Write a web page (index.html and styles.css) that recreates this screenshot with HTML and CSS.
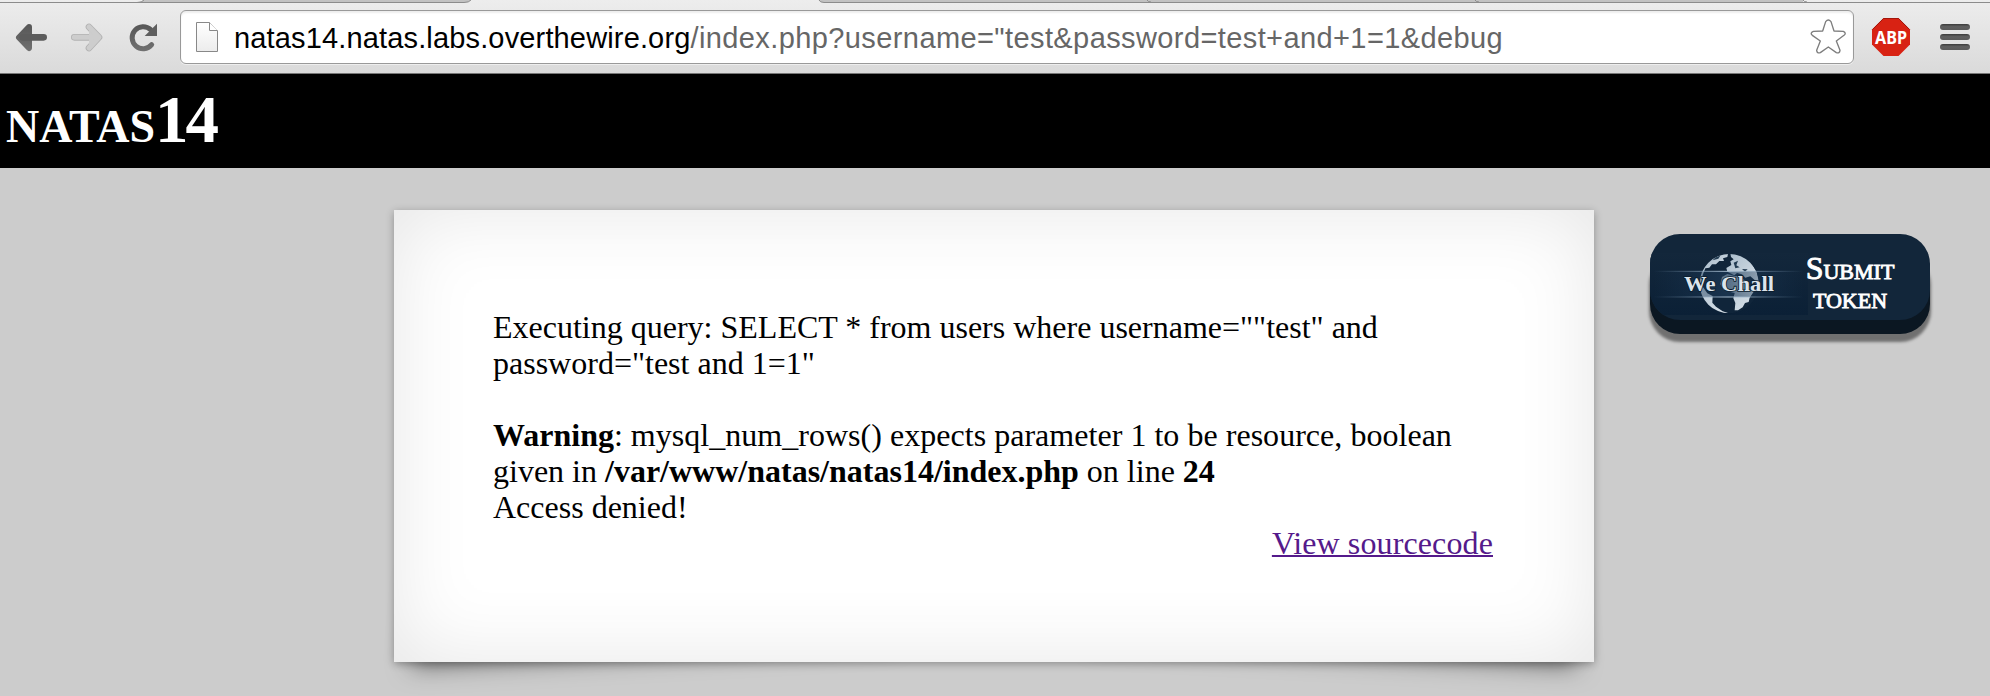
FILE: index.html
```
<!DOCTYPE html>
<html lang="en">
<head>
<meta charset="utf-8">
<title>natas14</title>
<link rel="stylesheet" href="styles.css">
</head>
<body>
<header class="browser">
  <svg class="tabs" width="1990" height="4" viewBox="0 0 1990 4">
    <path class="tab-bg" d="M139 2.5L144 0H471Q468 2.5 465 2.5Z"/>
    <path class="tab-bg" d="M819 0Q821 2.5 824 2.5H1803V0Z"/>
    <path class="tab-line" d="M0 2.5H137Q142 2.5 144 0M137 2.5H464Q469 2.5 471 0M819 0Q820 2.5 824 2.5H1990M1147 0Q1148 2 1151 2M1475 0Q1476 2 1479 2M1803 0Q1804 2 1807 2"/>
  </svg>
  <div class="toolbar">
    <svg class="nav-icons" width="176" height="54" viewBox="0 30 528 162">
      <defs>
        <linearGradient id="ink" x1="0" y1="70" x2="0" y2="154" gradientUnits="userSpaceOnUse">
          <stop offset="0" stop-color="#555"/><stop offset="1" stop-color="#717171"/>
        </linearGradient>
      </defs>
      <g fill="none" stroke="url(#ink)" stroke-width="18" stroke-linecap="round" stroke-linejoin="round">
        <path fill="#646464" d="M87 81L57 112.500L87 144V112Z"/>
        <path stroke="#5c5c5c" stroke-width="20" d="M68 112H131"/>
      </g>
      <g fill="none" stroke-linecap="round" stroke-linejoin="round">
        <path stroke="#b2b2b2" stroke-width="20" d="M223 112H286M267 81L297 112L267 144"/>
        <path fill="#cdcdcd" stroke="#cdcdcd" stroke-width="15" d="M223 112H286M267 81L297 112L267 144"/>
      </g>
      <path fill="none" stroke="url(#ink)" stroke-width="15" stroke-linecap="round" d="M455 134A33 33 0 1 1 452 89"/>
      <path fill="#5f5f5f" d="M471 71V108H434L446 96L458 84Z"/>
    </svg>
    <div class="address">
      <svg class="page-icon" width="24" height="32" viewBox="0 0 24 32">
        <defs><linearGradient id="paper" x1="0" y1="0" x2="0" y2="1"><stop offset="0" stop-color="#fff"/><stop offset="1" stop-color="#ececec"/></linearGradient></defs>
        <path fill="url(#paper)" stroke="#888" d="M1.500 1.500H14.500L22.500 10V30.500H1.500Z"/>
        <path fill="#fff" stroke="#888" d="M14.500 1.500V9.500H22.500"/>
      </svg>
      <span class="url"><span class="host">natas14.natas.labs.overthewire.org</span>/index.php?username="test&amp;password=test+and+1=1&amp;debug</span>
      <svg class="star" width="36" height="36" viewBox="628 56 108 108">
        <path fill="#fff" stroke="#7d7d7d" stroke-width="4" stroke-linejoin="round" d="M675 64Q683 54 691 64L700 92L728 93Q738 98 730 105L707 122L718 150Q717 160 707 157L683 140L659 157Q649 160 648 150L659 122L635 105Q627 98 638 93L666 92Z"/>
      </svg>
    </div>
    <svg class="abp" width="38" height="38" viewBox="0 0 38 38">
      <path fill="#d82213" d="M11.500 0H26.500L38 11.500V26.500L26.500 38H11.500L0 26.500V11.500Z"/>
      <path fill="none" stroke="#a3160b" d="M0.500 11.500L11.500 0.500H26.500L37.500 11.500"/>
      <text class="abp-text" x="3" y="26" textLength="32" lengthAdjust="spacingAndGlyphs">ABP</text>
    </svg>
    <span class="menu"><i class="bar"></i><i class="bar"></i><i class="bar"></i></span>
  </div>
</header>
<h1 class="title">natas<span class="level">14</span></h1>
<main class="page">
  <section class="card">
    <p class="output">Executing query: SELECT * from users where username=""test" and<br>password="test and 1=1"<br><br><b>Warning</b>: <span class="message">mysql_num_rows() expects parameter 1 to be resource, boolean</span><br>given in <b>/var/www/natas/natas14/index.php</b> on line <b>24</b><br>Access denied!</p>
    <a class="source" href="#">View sourcecode</a>
  </section>
  <a class="submit">
    <svg class="logo" width="158" height="62" viewBox="-90 24 474 186">
      <defs>
        <linearGradient id="panel" x1="0" y1="0" x2="0" y2="1"><stop offset="0" stop-color="#13273b"/><stop offset="1" stop-color="#0b2036"/></linearGradient>
        <linearGradient id="land" x1="0" y1="0" x2="1" y2="1"><stop offset="0" stop-color="#a9bccb"/><stop offset="1" stop-color="#dbe3ea"/></linearGradient>
        <linearGradient id="flare" gradientUnits="userSpaceOnUse" x1="-80" y1="0" x2="370" y2="0"><stop offset="0" stop-color="#6f8ba5" stop-opacity="0"/><stop offset=".5" stop-color="#a9bfd2"/><stop offset="1" stop-color="#6f8ba5" stop-opacity="0"/></linearGradient>
        <linearGradient id="band" x1="0" x2="1"><stop offset="0" stop-color="#193654" stop-opacity="0"/><stop offset=".5" stop-color="#1f3c5a" stop-opacity=".62"/><stop offset="1" stop-color="#193654" stop-opacity="0"/></linearGradient>
        <clipPath id="disc"><circle cx="148" cy="116" r="89"/></clipPath>
      </defs>
      <path fill="url(#panel)" d="M-90 24H384V210H-90Z"/>
      <g clip-path="url(#disc)">
        <circle cx="148" cy="116" r="89" fill="#10253a"/>
        <path fill="url(#land)" d="M56 86L70 62L92 42L118 26L144 27L142 36L129 40L132 48L118 48L108 58L96 58L88 68L76 70L68 90L66 122L82 145L98 153L97 173L108 185L128 199L144 204L130 210L96 194L70 168L56 130Z"/>
        <path fill="url(#land)" d="M151 25L176 27L210 48L230 80L238 116L231 128L224 105L211 94L196 98L186 88L171 84L163 91L142 80L139 69L154 60L151 49L161 43L153 36Z"/>
        <path fill="url(#land)" d="M126 96L142 87L167 94L183 91L191 104L203 109L207 124L218 130L221 140L209 158L206 171L195 174L188 187L174 196L164 196L166 174L160 160L164 144L148 140L130 134L121 117Z"/>
        <path fill="#233c52" d="M108 35L121 32L115 41L98 46ZM161 53L174 47L169 61L179 67L166 70ZM186 72L203 73L195 80Z"/>
      </g>
      <path fill="url(#band)" d="M-80 79H370V156H-80Z"/>
      <path fill="none" stroke="url(#flare)" stroke-width="3" d="M-80 79H370M-80 156H370"/>
      <text class="logo-text" x="12" y="137" textLength="270" lengthAdjust="spacingAndGlyphs">We Chall</text>
    </svg>
    <span class="submit-label">Submit<br>token</span>
  </a>
</main>
</body>
</html>
```
FILE: styles.css
```
body {
  margin: 0;
  height: 696px;
  overflow: hidden;
  background: #ccc;
  font: 32px/36px "Liberation Serif", serif;
}

/* Browser chrome */
.browser {
  height: 74px;
  box-sizing: border-box;
  border-bottom: 1px solid #777;
  background: linear-gradient(#ededed, #dadada);
}
.tabs { display: block; }
.tab-bg { fill: #c2c2c2; }
.tab-line { fill: none; stroke: #8c8c8c; }
.toolbar { display: flex; padding-top: 6px; }
.nav-icons { margin-right: 4px; }
.address {
  display: flex;
  align-items: center;
  width: 1674px;
  height: 54px;
  box-sizing: border-box;
  padding: 0 7px 0 14px;
  border: 1px solid #999;
  border-radius: 6px;
  background: #fff;
  box-shadow: inset 0 2px 2px #eee, 0 1px 0 #eee;
}
.url {
  margin: 2px 0 0 15px;
  font: 29px "Liberation Sans", sans-serif;
  letter-spacing: 0.4px;
  color: #666;
  white-space: nowrap;
}
.host { color: #000; letter-spacing: 0.15px; }
.star { margin-left: auto; }
.abp { margin: 8px 0 0 18px; overflow: visible; }
.abp-text { font: bold 18px "Noto Sans", sans-serif; fill: #fff; }
.menu {
  display: flex;
  flex-direction: column;
  gap: 4px;
  width: 30px;
  margin: 14px 0 0 30px;
}
.bar { height: 6px; border-radius: 3px; background: linear-gradient(#3c3c3c, #606060 45%, #5a5a5a); }

/* Page */
.title {
  height: 94px;
  box-sizing: border-box;
  margin: 0;
  padding-left: 6px;
  background: #000;
  color: #fff;
  font-size: 65px;
  line-height: 92px;
  font-variant: small-caps;
}
.level { font-size: 67px; letter-spacing: -3px; line-height: 1; }
.page {
  display: flex;
  align-items: flex-start;
  position: relative;
  z-index: 0;
}
.card {
  position: relative;
  width: 1200px;
  height: 452px;
  box-sizing: border-box;
  margin: 42px 0 0 394px;
  padding: 99px 101px 99px 99px;
  background: #fff;
  box-shadow: 0 2px 8px rgba(0, 0, 0, 0.3), inset 0 0 80px rgba(0, 0, 0, 0.1);
}
/* Lifted lower corners */
.card::before,
.card::after {
  content: "";
  position: absolute;
  z-index: -1;
  bottom: 24px;
  left: 24px;
  width: 480px;
  height: 90px;
  box-shadow: 0 16px 24px rgba(0, 0, 0, 0.5);
  transform: skew(-8deg) rotate(-3deg);
}
.card::after {
  left: auto;
  right: 24px;
  transform: skew(8deg) rotate(3deg);
}
.output { margin: 0; white-space: nowrap; }
.message { letter-spacing: 0.03px; }
.source {
  display: block;
  color: #551a8b;
  letter-spacing: 0.12px;
  text-align: right;
  text-decoration-thickness: 2px;
}

/* Submit button */
.submit {
  display: flex;
  align-items: flex-start;
  width: 280px;
  height: 86px;
  margin: 66px 0 0 56px;
  border-radius: 30px;
  overflow: hidden;
  background: #12263a;
  box-shadow: 0 14px 0 #0b1722, 0 21px 3px 1px rgba(0, 0, 0, 0.45);
}
.logo { flex: none; margin-top: 19px; }
.logo-text {
  font: bold 63px "Liberation Serif", serif;
  fill: #dce4eb;
  stroke: #0b1c2d;
  stroke-width: 5px;
  paint-order: stroke;
}
.submit-label {
  width: 90px;
  margin: 20px 0 0 -3px;
  color: #fff;
  font-size: 32px;
  line-height: 29px;
  font-variant: small-caps;
  text-align: center;
  -webkit-text-stroke: 0.9px #fff;
}
```
